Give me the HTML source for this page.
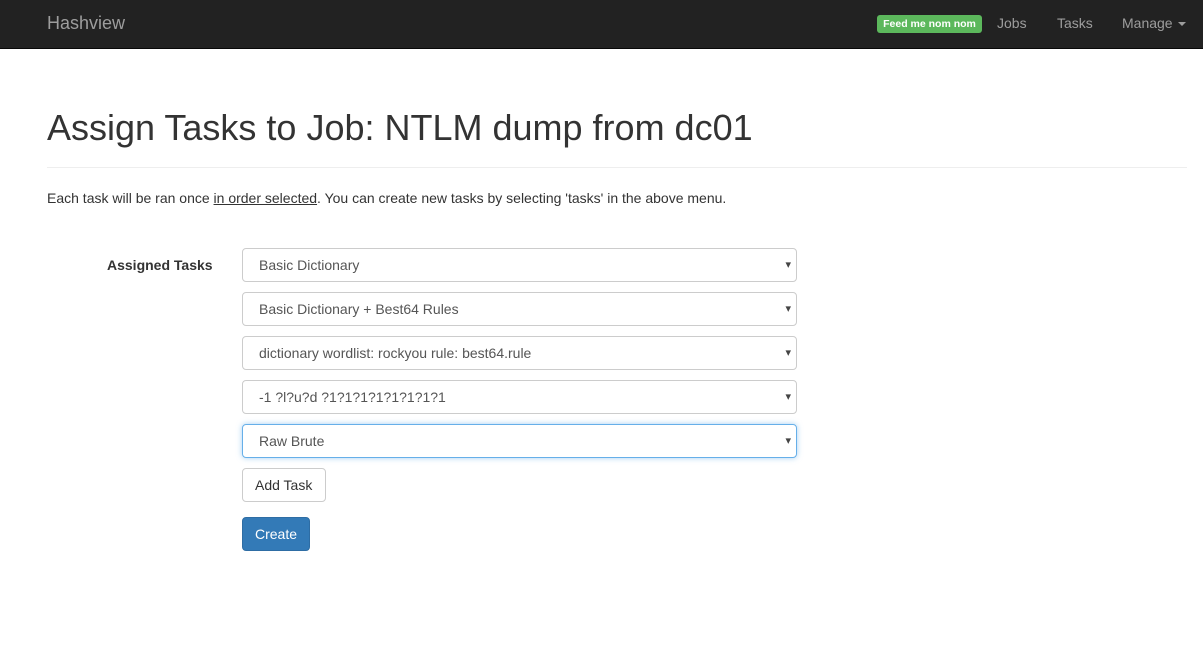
<!DOCTYPE html>
<html><head><style>
*{box-sizing:border-box}
body{margin:0;width:1203px;height:651px;background:#fff;font-family:"Liberation Sans",Arial,sans-serif;font-size:14px;color:#333;position:relative;overflow:hidden}
.nav{position:absolute;left:0;top:0;width:1203px;height:49px;background:#222;border-bottom:1px solid #080808}
.a{position:absolute;white-space:nowrap}
.brand{left:47px;top:13px;font-size:18px;color:#9d9d9d}
.nl{top:15px;color:#9d9d9d;font-size:14px}
.badge{left:877px;top:15px;width:105px;height:18px;background:#5cb85c;color:#fff;font-size:10.5px;font-weight:bold;border-radius:3px;text-align:center;line-height:18px}
h1{position:absolute;left:47px;top:108px;margin:0;font-size:36px;font-weight:500;line-height:40px;color:#333}
.hr{position:absolute;left:47px;top:167px;width:1140px;border-top:1px solid #eee}
.sel{position:absolute;left:242px;width:555px;height:34px;border:1px solid #ccc;border-radius:4px;padding:0 16px;line-height:32px;color:#555}
.sel:after{content:"▾";position:absolute;right:5px;top:0;font-size:11px;color:#444}
.foc{border-color:#66afe9;box-shadow:0 0 6px rgba(102,175,233,.6)}
.btn{position:absolute;left:242px;height:34px;border-radius:4px;line-height:32px;padding:0 12px;border:1px solid #ccc}
</style></head><body>
<div class="nav">
<div class="a brand">Hashview</div>
<div class="a badge">Feed me nom nom</div>
<div class="a nl" style="left:997px">Jobs</div>
<div class="a nl" style="left:1057px">Tasks</div>
<div class="a nl" style="left:1122px">Manage <span style="display:inline-block;border-top:4px solid #9d9d9d;border-left:4px solid transparent;border-right:4px solid transparent;vertical-align:middle;margin-left:2px"></span></div>
</div>
<h1>Assign Tasks to Job: NTLM dump from dc01</h1>
<div class="hr"></div>
<div class="a" style="left:47px;top:190px">Each task will be ran once <u>in order selected</u>. You can create new tasks by selecting 'tasks' in the above menu.</div>
<div class="a" style="left:107px;top:257px;font-weight:bold">Assigned Tasks</div>
<div class="sel" style="top:248px">Basic Dictionary</div>
<div class="sel" style="top:292px">Basic Dictionary + Best64 Rules</div>
<div class="sel" style="top:336px">dictionary wordlist: rockyou rule: best64.rule</div>
<div class="sel" style="top:380px">-1 ?l?u?d ?1?1?1?1?1?1?1?1</div>
<div class="sel foc" style="top:424px">Raw Brute</div>
<div class="btn" style="top:468px;width:84px;color:#333">Add Task</div>
<div class="btn" style="top:517px;width:68px;background:#337ab7;border-color:#2e6da4;color:#fff">Create</div>
</body></html>
